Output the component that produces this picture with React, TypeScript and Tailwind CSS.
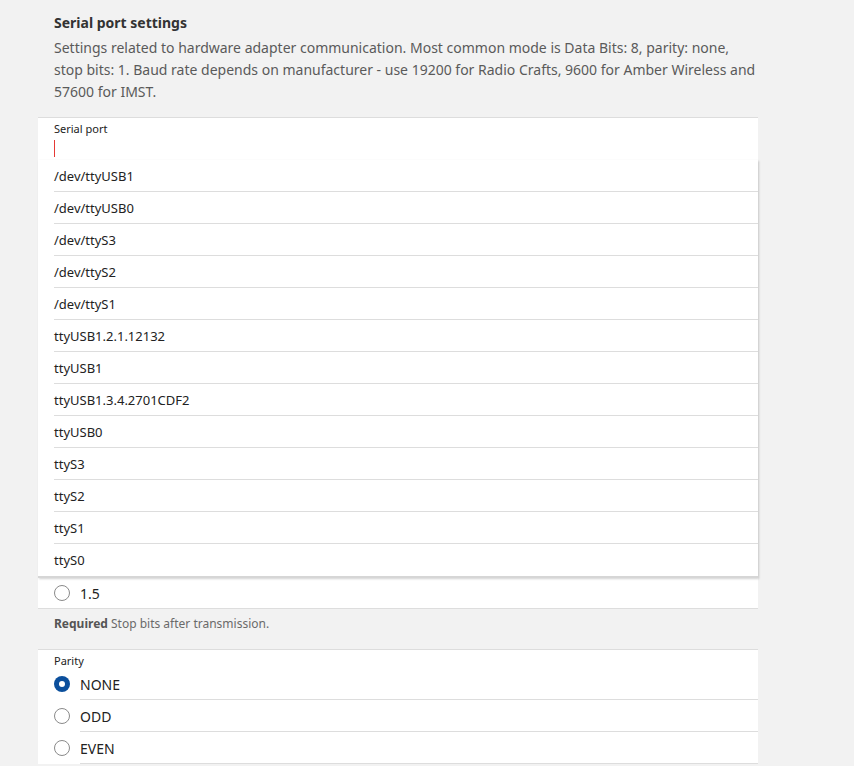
import React from 'react';

const ports = [
  '/dev/ttyUSB1',
  '/dev/ttyUSB0',
  '/dev/ttyS3',
  '/dev/ttyS2',
  '/dev/ttyS1',
  'ttyUSB1.2.1.12132',
  'ttyUSB1',
  'ttyUSB1.3.4.2701CDF2',
  'ttyUSB0',
  'ttyS3',
  'ttyS2',
  'ttyS1',
  'ttyS0',
];

const Radio: React.FC<{ checked?: boolean }> = ({ checked }) =>
  checked ? (
    <span className="w-4 h-4 rounded-full bg-[#0b4f9c] flex items-center justify-center shrink-0">
      <span className="w-[6px] h-[6px] rounded-full bg-white" />
    </span>
  ) : (
    <span className="w-4 h-4 rounded-full border border-[#8a8a8a] bg-white shrink-0" />
  );

export default function App() {
  return (
    <div className="min-h-screen bg-[#f2f2f2] font-['Noto_Sans',sans-serif] text-[#222]">
      <div className="pl-[38px] w-[758px]">
        {/* Section header */}
        <div className="pl-4 pt-[13px] pb-[14px]">
          <h2 className="text-[14px] leading-[20px] font-bold text-[#333] mb-1">Serial port settings</h2>
          <p className="text-[14px] leading-[22px] text-[#5a5a5a] w-[705px]">
            Settings related to hardware adapter communication. Most common mode is Data Bits: 8, parity: none,
            stop bits: 1. Baud rate depends on manufacturer - use 19200 for Radio Crafts, 9600 for Amber Wireless and
            57600 for IMST.
          </p>
        </div>

        {/* Serial port field with open dropdown */}
        <div className="bg-white border-t border-[#dddddd]">
          <div className="pl-4 pt-[3px]">
            <div className="text-[11px] leading-[16px] text-[#222]">Serial port</div>
            <div className="h-[23px] pt-[3px]">
              <span className="block w-px h-[17px] bg-[#e53935]" />
            </div>
          </div>
          <ul className="bg-white shadow-[1px_1px_2px_rgba(0,0,0,0.18)] border-b-2 border-[#d6d6d6]">
            {ports.map((p, i) => (
              <li key={p} className="pl-4">
                <div
                  className={
                    i < ports.length - 1
                      ? 'h-[32px] pt-[2px] flex items-center text-[13px] border-b border-[#dddddd]'
                      : 'h-[32px] pt-[2px] flex items-center text-[13px]'
                  }
                >
                  {p}
                </div>
              </li>
            ))}
          </ul>
          <div className="h-[31px] flex items-center pl-4 border-b border-[#dddddd]">
            <Radio />
            <span className="ml-[10px] text-[14px]">1.5</span>
          </div>
        </div>
        <div className="pl-4 pt-[7px] h-[40px] text-[12px] leading-[16px] text-[#6a6a6a]">
          <span className="font-bold text-[#555]">Required</span> Stop bits after transmission.
        </div>

        {/* Parity */}
        <div className="bg-white border-t border-[#dddddd]">
          <div className="pl-4 pt-[3px] h-[18px] text-[11px] leading-[16px]">Parity</div>
          {[
            { label: 'NONE', checked: true },
            { label: 'ODD' },
            { label: 'EVEN' },
          ].map((o) => (
            <div key={o.label} className="flex items-center pl-4 h-[32px]">
              <Radio checked={o.checked} />
              <div className="ml-[10px] flex-1 h-full pt-[2px] flex items-center border-b border-[#dddddd] text-[14px]">
                {o.label}
              </div>
            </div>
          ))}
        </div>
      </div>
    </div>
  );
}
